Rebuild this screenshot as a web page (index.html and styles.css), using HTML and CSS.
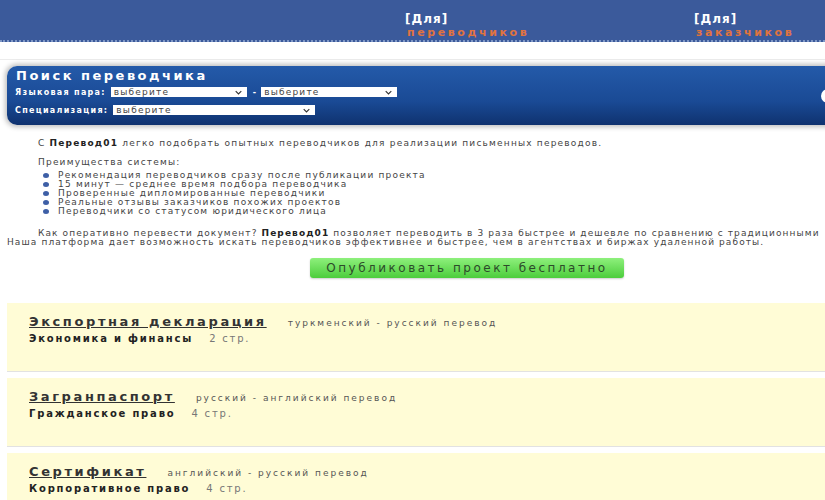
FILE: index.html
```html
<!DOCTYPE html>
<html lang="ru">
<head>
  <meta charset="UTF-8">
  <meta name="viewport" content="width=device-width, initial-scale=1.0">
  <title>Перевод01 — поиск переводчика</title>
  <link rel="stylesheet" href="styles.css">
</head>
<body>
  <div class="page">
    <div class="header">
      <a class="role-link" href="#">
        <span class="role-top">[Для]</span>
        <span class="role-name">переводчиков</span>
      </a>
      <a class="role-link" href="#">
        <span class="role-top">[Для]</span>
        <span class="role-name">заказчиков</span>
      </a>
    </div>

    <div class="content">
      <div class="search">
        <div class="search-body">
          <h2>Поиск переводчика</h2>
          <div class="search-row">
            <label>Языковая пара:</label>
            <span class="fake-select w136">выберите
              <svg viewBox="0 0 10 6"><path d="M1 1l4 4 4-4" fill="none" stroke="#333" stroke-width="1.6"/></svg>
            </span>
            <span class="dash">-</span>
            <span class="fake-select w136">выберите
              <svg viewBox="0 0 10 6"><path d="M1 1l4 4 4-4" fill="none" stroke="#333" stroke-width="1.6"/></svg>
            </span>
          </div>
          <div class="search-row">
            <label>Специализация:</label>
            <span class="fake-select w202">выберите
              <svg viewBox="0 0 10 6"><path d="M1 1l4 4 4-4" fill="none" stroke="#333" stroke-width="1.6"/></svg>
            </span>
          </div>
        </div>
        <span class="search-btn"></span>
      </div>

      <div class="intro">
        <p>С <b>Перевод01</b> легко подобрать опытных переводчиков для реализации письменных переводов.</p>
        <p class="tight">Преимущества системы:</p>
        <ul>
          <li>Рекомендация переводчиков сразу после публикации проекта</li>
          <li>15 минут — среднее время подбора переводчика</li>
          <li>Проверенные дипломированные переводчики</li>
          <li>Реальные отзывы заказчиков похожих проектов</li>
          <li>Переводчики со статусом юридического лица</li>
        </ul>
        <p class="wide"><span class="indent">Как оперативно перевести документ? <b>Перевод01</b> позволяет переводить в 3 раза быстрее и дешевле по сравнению с традиционными</span><br>Наша платформа дает возможность искать переводчиков эффективнее и быстрее, чем в агентствах и биржах удаленной работы.</p>
      </div>

      <div class="publish">
        <a class="btn-green" href="#">Опубликовать проект бесплатно</a>
      </div>

      <div class="projects">
        <div class="project">
          <div class="project-head">
            <a href="#">Экспортная декларация</a>
            <span class="langs">туркменский - русский перевод</span>
          </div>
          <div class="project-meta"><b>Экономика и финансы</b><span>2 стр.</span></div>
        </div>
        <div class="project">
          <div class="project-head">
            <a href="#">Загранпаспорт</a>
            <span class="langs">русский - английский перевод</span>
          </div>
          <div class="project-meta"><b>Гражданское право</b><span>4 стр.</span></div>
        </div>
        <div class="project">
          <div class="project-head">
            <a href="#">Сертификат</a>
            <span class="langs">английский - русский перевод</span>
          </div>
          <div class="project-meta"><b>Корпоративное право</b><span>4 стр.</span></div>
        </div>
      </div>
    </div>
  </div>
</body>
</html>
```

FILE: styles.css
```css
html, body {
  margin: 0;
  overflow: hidden;
  background: #fff;
}
body {
  font-family: "DejaVu Sans", Verdana, sans-serif;
  color: #333;
}
.page {
  width: 900px;
}

/* top bar */
.header {
  height: 40px;
  background: #3b5a9b;
  border-bottom: 2px dotted #7f97c6;
  display: flex;
  padding-left: 405px;
}
.role-link {
  display: flex;
  flex-direction: column;
  flex-shrink: 0;
  text-decoration: none;
  padding-top: 12px;
  width: 289px;
}
.role-top {
  color: #fff;
  font-weight: bold;
  font-size: 12px;
  line-height: 14px;
  letter-spacing: 1px;
}
.role-name {
  color: #e0733f;
  font-weight: bold;
  font-size: 11px;
  line-height: 13px;
  letter-spacing: 2.6px;
  padding-left: 2px;
}

.content {
  margin-top: 17px;
  border-top: 1px solid #ececec;
  padding: 6px 0 0 7px;
}

/* search panel */
.search {
  height: 59px;
  border-radius: 10px 0 0 10px;
  background: linear-gradient(#245aa9, #1a4a95 60%, #0f326f);
  box-shadow: 0 0 5px 2px rgba(0, 0, 0, 0.25);
  display: flex;
  align-items: flex-start;
  color: #fff;
}
.search-body {
  padding: 3px 0 0 8px;
  width: 797px;
}
.search h2 {
  margin: 0 0 0 1px;
  font-size: 13px;
  line-height: 14px;
  letter-spacing: 2.5px;
}
.search-row {
  display: flex;
  align-items: center;
  height: 18px;
  font-size: 8px;
}
.search-row label {
  font-weight: bold;
  letter-spacing: 1.3px;
  margin-right: 5px;
}
.fake-select {
  display: flex;
  align-items: center;
  justify-content: space-between;
  height: 10px;
  background: #fff;
  color: #444;
  font-size: 9px;
  letter-spacing: 1.2px;
  padding: 0 5px 0 3px;
  box-sizing: border-box;
}
.fake-select svg {
  width: 7px;
  height: 5px;
}
.w136 { width: 136px; }
.w202 { width: 202px; }
.dash {
  margin: 0 5px 0 6px;
  font-weight: bold;
}
.search-btn {
  align-self: center;
  width: 14px;
  height: 14px;
  border-radius: 50%;
  background: #fff;
  margin-left: 9px;
}

/* intro text */
.intro {
  font-size: 9px;
  line-height: 9px;
  letter-spacing: 1.2px;
  color: #444;
  padding-top: 14px;
}
.intro p {
  margin: 0 0 10px 31px;
}
.intro p.tight {
  margin-bottom: 4px;
}
.intro ul {
  margin: 0 0 13px 36px;
  padding: 0;
  list-style: none;
}
.intro li {
  position: relative;
  padding-left: 15px;
}
.intro li::before {
  content: "";
  position: absolute;
  left: 0;
  top: 2px;
  width: 6px;
  height: 5px;
  border-radius: 50%;
  background: #3e5fa6;
}
.intro b {
  color: #222;
}
.intro .wide {
  margin-left: 0;
  white-space: nowrap;
  letter-spacing: 1.1px;
}
.intro .indent {
  padding-left: 31px;
}

/* publish button */
.publish {
  padding: 1px 0 0 303px;
}
.btn-green {
  display: block;
  width: 314px;
  height: 20px;
  line-height: 20px;
  text-align: center;
  border-radius: 3px;
  background: linear-gradient(#8ef07c, #4ccd3c);
  box-shadow: 0 1px 2px rgba(0, 0, 0, 0.2);
  color: #2d4a2a;
  font-size: 12px;
  letter-spacing: 2.5px;
  text-decoration: none;
}

/* latest projects */
.projects {
  margin-top: 25px;
}
.project {
  height: 69px;
  background: #fffcd6;
  border-bottom: 1px solid #e2e2e2;
  margin-bottom: 6px;
  padding: 11px 0 0 22px;
  box-sizing: border-box;
}
.project-head {
  display: flex;
  align-items: baseline;
  gap: 21px;
  height: 18px;
}
.project-head a {
  color: #333;
  font-weight: bold;
  font-size: 13px;
  letter-spacing: 2.6px;
}
.langs {
  font-size: 9px;
  letter-spacing: 2px;
  color: #555;
}
.project-meta {
  display: flex;
  gap: 16px;
  font-size: 10px;
  letter-spacing: 1.8px;
  line-height: 14px;
}
.project-meta b {
  color: #222;
}
.project-meta span {
  color: #777;
}
```
